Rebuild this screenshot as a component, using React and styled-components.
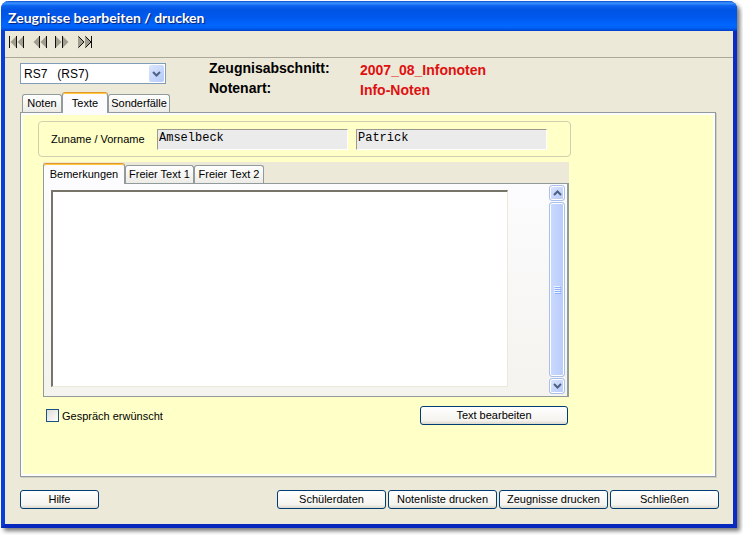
import React, { useState } from "react";
import styled, { createGlobalStyle } from "styled-components";

const GlobalStyle = createGlobalStyle`
  *, *::before, *::after { box-sizing: border-box; }
  body {
    margin: 0;
    background: #fff;
    color: #000;
    font: 11px/16px "Liberation Sans", Arial, sans-serif;
  }
  button, input, select, textarea { font: inherit; color: inherit; margin: 0; }
`;

const Window = styled.main`
  margin: 1px 6px 7px 1px;
  border: 4px solid #0a3fd8;
  border-top: 0;
  border-color: #0a48e0 #0a2cc4 #0628bc #0a3cd8;
  border-radius: 8px 8px 0 0;
  background: #ece9d8;
  box-shadow: 3px 3px 4px #777;
`;

const TitleBar = styled.header`
  height: 30px;
  margin: 0 -4px;
  padding: 3px 7px 0;
  display: flex;
  align-items: center;
  border-radius: 8px 8px 0 0;
  background: linear-gradient(#0a4fd0 0, #3a94ff 7%, #0c62ee 16%, #0054e3 30%, #0058ee 55%, #0066ff 80%, #0062f6 90%, #003dc8 100%);
`;

const Title = styled.h1`
  margin: 0;
  color: #fff;
  font: bold 14px/18px Lato, sans-serif;
  text-shadow: 1px 1px 1px #0a1f6e;
  white-space: nowrap;
`;

const Toolbar = styled.nav`
  display: flex;
  gap: 8px;
  height: 27px;
  padding: 4px 3px;
  border-bottom: 1px solid #aca899;
`;

const NavButton = styled.button`
  height: 14px;
  padding: 0;
  border: 0;
  background: none;
  svg { display: block; }
`;

const Body = styled.div`
  padding: 2px 17px 15px 15px;
`;

const Head = styled.div`
  display: flex;
  align-items: flex-start;
  gap: 43px;
  height: 32px;
`;

const SelectBox = styled.div`
  display: grid;
  width: 146px;
  height: 21px;
  margin-top: 3px;
`;

const Select = styled.select`
  grid-area: 1 / 1;
  appearance: none;
  padding: 0 20px 0 3px;
  border: 1px solid #7f9db9;
  border-radius: 0;
  background: #fff;
  font-size: 12px;
`;

const SelectArrow = styled.span`
  grid-area: 1 / 1;
  justify-self: end;
  align-self: center;
  display: grid;
  place-items: center;
  width: 15px;
  height: 17px;
  margin-right: 2px;
  border-radius: 2px;
  background: linear-gradient(135deg, #dbe5fe, #b5c9f8);
  pointer-events: none;
`;

const Facts = styled.dl`
  display: grid;
  grid-template-columns: 151px auto;
  align-items: start;
  margin: 0;
  font: bold 14px/16px "Liberation Sans", Arial, sans-serif;
  white-space: nowrap;
`;
const FactName = styled.dt``;
const FactValue = styled.dd`
  margin: 0;
  color: #e01010;
  line-height: 20px;
`;

const TabList = styled.div`
  display: flex;
  align-items: flex-end;
  height: ${(p) => (p.$inner ? 21 : 20)}px;
  padding-left: ${(p) => (p.$inner ? 0 : 2)}px;
  background: ${(p) => (p.$inner ? "#ece9d8" : "transparent")};
`;

const Tab = styled.button`
  height: ${(p) => (p["aria-selected"] ? 21 : 18)}px;
  width: ${(p) => p.$width}px;
  margin-bottom: ${(p) => (p["aria-selected"] ? -1 : 0)}px;
  padding: 0;
  flex: none;
  white-space: nowrap;
  text-align: center;
  line-height: 15px;
  border: 1px solid #919b9c;
  border-bottom: 0;
  border-radius: 3px 3px 0 0;
  background: ${(p) => (p["aria-selected"] ? "#fcfcfe" : "linear-gradient(#fff, #ecebe6)")};
  box-shadow: ${(p) => (p["aria-selected"] ? "inset 0 1px #ffc73c" : "none")};
  border-top-color: ${(p) => (p["aria-selected"] ? "#e5972d" : "#919b9c")};
  z-index: ${(p) => (p["aria-selected"] ? 1 : 0)};
`;

const Page = styled.section`
  min-height: 365px;
  padding: 8px 16px 0 17px;
  border: 1px solid #919b9c;
  background: #ffffc8;
  box-shadow: inset 0 0 0 2px #fcfcfe, 1px 1px 0 #d0cebf;
`;

const Person = styled.div`
  display: flex;
  align-items: center;
  width: 100%;
  max-width: 533px;
  height: 36px;
  padding: 0 23px 0 12px;
  border: 1px solid #d0d0b0;
  border-radius: 4px;
`;

const PersonLabel = styled.label`
  width: 106px;
  flex: none;
  white-space: nowrap;
`;

const NameField = styled.input`
  flex: 1;
  min-width: 0;
  height: 21px;
  padding: 0 1px 3px;
  margin-right: ${(p) => p.$gap}px;
  border: 1px solid;
  border-color: #9c9a8c #fff #fff #9c9a8c;
  border-radius: 0;
  background: #ebebeb;
  font: 12px/16px "Liberation Mono", "Courier New", monospace;
`;

const Notes = styled.div`
  width: 100%;
  max-width: 526px;
  margin: 5px 0 0 5px;
`;

const NotesPanel = styled.div`
  display: flex;
  justify-content: space-between;
  height: 214px;
  padding: 1px 2px 2px 7px;
  border: 1px solid #919b9c;
  border-right-width: 2px;
  background: linear-gradient(#fcfcfe, #f4f3ee);
`;

const NotesText = styled.textarea`
  flex: 1;
  height: 197px;
  margin: 5px 41px 0 0;
  padding: 2px;
  resize: none;
  border: 1px solid #ece9d8;
  border-top: 2px solid #77756a;
  border-left: 2px solid #77756a;
  border-radius: 0;
  background: #fff;
`;

const ScrollBar = styled.div`
  display: flex;
  flex-direction: column;
  gap: 1px;
  width: 16px;
  flex: none;
`;

const scrollPart = `
  display: grid;
  place-items: center;
  padding: 0;
  border: 1px solid #a9bfee;
  border-radius: 3px;
  box-shadow: inset 0 0 0 1px #fff;
`;

const ScrollArrow = styled.button`
  ${scrollPart}
  height: 16px;
  background: linear-gradient(135deg, #dbe5fe, #b5c9f8);
`;

const ScrollThumb = styled.div`
  ${scrollPart}
  flex: 1;
  background: linear-gradient(90deg, #cbdafe, #b8ccfb);
`;

const NotesActions = styled.div`
  display: flex;
  align-items: center;
  justify-content: space-between;
  width: 100%;
  max-width: 531px;
  padding: 9px 1px 0 8px;
`;

const CheckLabel = styled.label`
  display: flex;
  align-items: center;
  gap: 3px;
`;

const CheckBox = styled.input`
  appearance: none;
  width: 13px;
  height: 13px;
  border: 1px solid #1c5180;
  background: linear-gradient(135deg, #dcdcd7, #fff);
  &:checked { background: #21a121; }
`;

const Button = styled.button`
  width: ${(p) => p.$width}px;
  height: 19px;
  padding: 0;
  border: 1px solid #003c74;
  border-radius: 3px;
  background: linear-gradient(#fff, #f4f3ee 80%, #dcd8cc);
  white-space: nowrap;
  line-height: 17px;
`;

const Footer = styled.footer`
  display: flex;
  gap: 2px;
  padding-top: 13px;
  margin-right: -3px;
`;

const HelpButton = styled(Button)`
  margin-right: auto;
`;

function Nav({ label, width, children }) {
  return (
    <NavButton type="button" aria-label={label}>
      <svg width={width} height="14" viewBox={`0 0 ${width} 14`}>
        {children}
      </svg>
    </NavButton>
  );
}

const Left = ({ x }) => (
  <>
    <path d={`M${x + 6} 0.500 L${x - 0.5} 7 L${x + 6} 13.500Z`} fill="#a09e8e" />
    <path d={`M${x + 5.5} 1V13`} stroke="#111" />
  </>
);
const Right = ({ x, outlined }) => (
  <>
    <path d={`M${x} 0.500 L${x + 6.5} 7 L${x} 13.500Z`} fill="#a09e8e" />
    {outlined ? (
      <path d={`M${x + 0.5} 1.500 L${x + 6} 7 L${x + 0.5} 12.500`} stroke="#111" fill="none" />
    ) : (
      <path d={`M${x + 0.5} 1V13`} stroke="#111" />
    )}
  </>
);

const Chevron = ({ up }) => (
  <svg width="9" height="6" viewBox="0 0 9 6" aria-hidden="true">
    <path d={up ? "M1 5 4.500 1.500 8 5" : "M1 1 4.500 4.500 8 1"} fill="none" stroke="#4d6185" strokeWidth="2" />
  </svg>
);

function Tabs({ items, initial, inner, label }) {
  const [active, setActive] = useState(initial);
  return (
    <TabList role="tablist" aria-label={label} $inner={inner}>
      {items.map(([name, width]) => (
        <Tab key={name} type="button" role="tab" aria-selected={name === active} $width={width} onClick={() => setActive(name)}>
          {name}
        </Tab>
      ))}
    </TabList>
  );
}

export default function App() {
  return (
    <>
      <GlobalStyle />
      <Window>
        <TitleBar>
          <Title>Zeugnisse bearbeiten / drucken</Title>
        </TitleBar>
        <Toolbar>
          <Nav label="Erster" width={17}><path d="M1.500 1V13" stroke="#111" /><Left x={3} /><Left x={10} /></Nav>
          <Nav label="Zurück" width={14}><Left x={1} /><Left x={8} /></Nav>
          <Nav label="Weiter" width={14}><Right x={0} /><Right x={7} /></Nav>
          <Nav label="Letzter" width={16}><Right x={1} outlined /><Right x={8} outlined /><path d="M14.500 1V13" stroke="#111" /></Nav>
        </Toolbar>
        <Body>
          <Head>
            <SelectBox>
              <Select aria-label="Klasse" defaultValue="RS7">
                <option value="RS7">{"RS7\u00a0\u00a0\u00a0(RS7)"}</option>
              </Select>
              <SelectArrow><Chevron /></SelectArrow>
            </SelectBox>
            <Facts>
              <FactName>Zeugnisabschnitt:</FactName>
              <FactValue>2007_08_Infonoten</FactValue>
              <FactName>Notenart:</FactName>
              <FactValue>Info-Noten</FactValue>
            </Facts>
          </Head>
          <Tabs label="Bereiche" initial="Texte" items={[["Noten", 40], ["Texte", 46], ["Sonderfälle", 62]]} />
          <Page>
            <Person>
              <PersonLabel htmlFor="surname">Zuname / Vorname</PersonLabel>
              <NameField id="surname" defaultValue="Amselbeck" readOnly $gap={8} />
              <NameField aria-label="Vorname" defaultValue="Patrick" readOnly $gap={0} />
            </Person>
            <Notes>
              <Tabs inner label="Texte" initial="Bemerkungen" items={[["Bemerkungen", 82], ["Freier Text 1", 69], ["Freier Text 2", 70]]} />
              <NotesPanel>
                <NotesText aria-label="Bemerkungen" />
                <ScrollBar>
                  <ScrollArrow type="button" aria-label="Nach oben"><Chevron up /></ScrollArrow>
                  <ScrollThumb>
                    <svg width="7" height="8" viewBox="0 0 7 8" aria-hidden="true" shapeRendering="crispEdges">
                      <path d="M0 .5H6M0 2.500H6M0 4.500H6M0 6.500H6" stroke="#eef4fe" />
                      <path d="M1 1.500H7M1 3.500H7M1 5.500H7M1 7.500H7" stroke="#8cb0f8" />
                    </svg>
                  </ScrollThumb>
                  <ScrollArrow type="button" aria-label="Nach unten"><Chevron /></ScrollArrow>
                </ScrollBar>
              </NotesPanel>
            </Notes>
            <NotesActions>
              <CheckLabel>
                <CheckBox type="checkbox" />
                Gespräch erwünscht
              </CheckLabel>
              <Button type="button" $width={148}>Text bearbeiten</Button>
            </NotesActions>
          </Page>
          <Footer>
            <HelpButton type="button" $width={79}>Hilfe</HelpButton>
            <Button type="button" $width={109}>Schülerdaten</Button>
            <Button type="button" $width={109}>Notenliste drucken</Button>
            <Button type="button" $width={109}>Zeugnisse drucken</Button>
            <Button type="button" $width={109}>Schließen</Button>
          </Footer>
        </Body>
      </Window>
    </>
  );
}
